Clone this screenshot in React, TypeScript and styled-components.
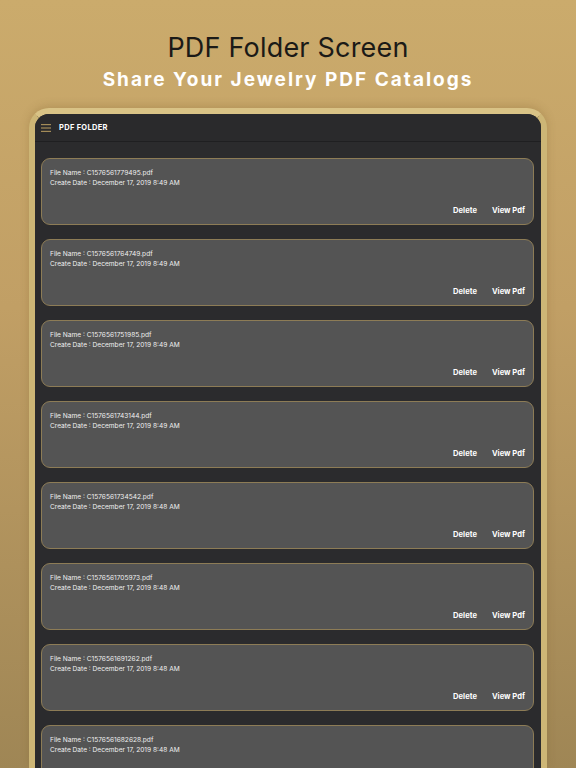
import React from "react";
import styled, { createGlobalStyle } from "styled-components";

const Global = createGlobalStyle`
  html, body { margin: 0; padding: 0; }
  body { width: 576px; height: 768px; overflow: hidden; font-family: "Inter", "Noto Sans", sans-serif; }
`;

const Page = styled.div`
  width: 576px;
  height: 768px;
  overflow: hidden;
  background: linear-gradient(180deg, #cbab6c 0%, #c19f65 40%, #9f8655 100%);
  display: flex;
  flex-direction: column;
  align-items: center;
`;

const Title = styled.h1`
  margin: 33px 0 0;
  font-family: "Inter", sans-serif;
  font-weight: 400;
  font-size: 27px;
  line-height: 30px;
  color: #1b1a17;
  letter-spacing: 0.2px;
`;

const Subtitle = styled.h2`
  margin: 5px 0 0;
  font-family: "Inter", sans-serif;
  font-weight: 700;
  font-size: 19px;
  line-height: 24px;
  color: #ffffff;
  letter-spacing: 2px;
`;

const Frame = styled.div`
  margin-top: 16px;
  width: 506px;
  flex: 1;
  min-height: 0;
  border: 6px solid #d9c386;
  border-bottom: none;
  border-radius: 20px 20px 0 0;
  background: #2b2b2d;
  box-shadow: 0 -2px 8px rgba(120, 90, 40, 0.25);
  overflow: hidden;
  display: flex;
  flex-direction: column;
  border-left-color: #cdb676;
  border-right-color: #cdb676;
`;

const Header = styled.div`
  flex-shrink: 0;
  height: 27px;
  display: flex;
  align-items: center;
  gap: 8px;
  padding-left: 6px;
  background: #2a2a2c;
  border-bottom: 1px solid #1f1f21;
`;

const Menu = styled.svg`
  width: 10px;
  height: 8px;
  display: block;
`;

const HeaderTitle = styled.span`
  font-family: "Inter", sans-serif;
  font-weight: 700;
  font-size: 7.5px;
  color: #ffffff;
  letter-spacing: 0.3px;
`;

const List = styled.div`
  flex-shrink: 0;
  padding: 16px 7px 0 6px;
  display: flex;
  flex-direction: column;
  gap: 14px;
`;

const Card = styled.div`
  flex-shrink: 0;
  height: 67px;
  box-sizing: border-box;
  background: #545454;
  border: 1px solid #8d7c56;
  border-radius: 9px;
  padding: 9px 8px 0 8px;
  display: flex;
  flex-direction: column;
`;

const Line = styled.div`
  font-family: "Inter", sans-serif;
  font-size: 6.6px;
  line-height: 10px;
  color: #f0f0f0;
`;

const Actions = styled.div`
  margin-top: auto;
  margin-bottom: 9px;
  display: flex;
  justify-content: flex-end;
  gap: 15px;
`;

const Action = styled.span`
  font-family: "Inter", sans-serif;
  font-weight: 700;
  font-size: 7.6px;
  color: #ffffff;
`;

const files = [
  ["C1576561779495.pdf", "8:49 AM"],
  ["C1576561764749.pdf", "8:49 AM"],
  ["C1576561751985.pdf", "8:49 AM"],
  ["C1576561743144.pdf", "8:49 AM"],
  ["C1576561734542.pdf", "8:48 AM"],
  ["C1576561705973.pdf", "8:48 AM"],
  ["C1576561691262.pdf", "8:48 AM"],
  ["C1576561682628.pdf", "8:48 AM"],
];

export default function App() {
  return (
    <>
      <Global />
      <Page>
        <Title>PDF Folder Screen</Title>
        <Subtitle>Share Your Jewelry PDF Catalogs</Subtitle>
        <Frame>
          <Header>
            <Menu viewBox="0 0 10 8">
              <rect x="0" y="0" width="10" height="1.2" fill="#a38b58" />
              <rect x="0" y="3.4" width="10" height="1.2" fill="#a38b58" />
              <rect x="0" y="6.8" width="10" height="1.2" fill="#a38b58" />
            </Menu>
            <HeaderTitle>PDF FOLDER</HeaderTitle>
          </Header>
          <List>
            {files.map(([name, time]) => (
              <Card key={name}>
                <Line>File Name : {name}</Line>
                <Line>Create Date : December 17, 2019 {time}</Line>
                <Actions>
                  <Action>Delete</Action>
                  <Action>View Pdf</Action>
                </Actions>
              </Card>
            ))}
          </List>
        </Frame>
      </Page>
    </>
  );
}
